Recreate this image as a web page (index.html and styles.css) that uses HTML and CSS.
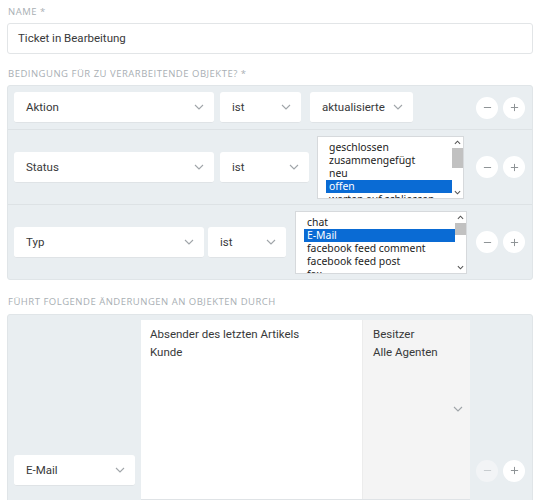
FILE: index.html
```html
<!DOCTYPE html>
<html lang="de">
<head>
    <meta charset="UTF-8">
    <meta name="viewport" content="width=device-width, initial-scale=1.0">
    <title>Trigger bearbeiten</title>
    <link rel="stylesheet" href="styles.css">
</head>
<body>
    <div class="form">
        <div class="label">Name *</div>
        <div class="input">Ticket in Bearbeitung</div>

        <div class="label label-gap">Bedingung für zu verarbeitende Objekte? *</div>
        <div class="panel">
            <div class="row">
                <div class="select w-attr">Aktion
                    <svg class="chev" viewBox="0 0 10 6"><path d="M1 1l4 4 4-4"/></svg>
                </div>
                <div class="select w-op">ist
                    <svg class="chev" viewBox="0 0 10 6"><path d="M1 1l4 4 4-4"/></svg>
                </div>
                <div class="select w-val">aktualisierte
                    <svg class="chev" viewBox="0 0 10 6"><path d="M1 1l4 4 4-4"/></svg>
                </div>
                <div class="controls">
                    <span class="circle"><svg viewBox="0 0 10 10"><path d="M1 5h8"/></svg></span>
                    <span class="circle"><svg viewBox="0 0 10 10"><path d="M1 5h8M5 1v8"/></svg></span>
                </div>
            </div>

            <div class="row row-tall">
                <div class="select w-attr">Status
                    <svg class="chev" viewBox="0 0 10 6"><path d="M1 1l4 4 4-4"/></svg>
                </div>
                <div class="select w-op2">ist
                    <svg class="chev" viewBox="0 0 10 6"><path d="M1 1l4 4 4-4"/></svg>
                </div>
                <div class="listbox lb-state">
                    <ul class="options">
                        <li>geschlossen</li>
                        <li>zusammengefügt</li>
                        <li>neu</li>
                        <li class="selected">offen</li>
                        <li>warten auf schliessen</li>
                    </ul>
                    <div class="scrollbar">
                        <svg class="arrow" viewBox="0 0 8 5"><path d="M1 4l3-3 3 3"/></svg>
                        <div class="track"><div class="thumb thumb-state"></div></div>
                        <svg class="arrow" viewBox="0 0 8 5"><path d="M1 1l3 3 3-3"/></svg>
                    </div>
                </div>
                <div class="controls">
                    <span class="circle"><svg viewBox="0 0 10 10"><path d="M1 5h8"/></svg></span>
                    <span class="circle"><svg viewBox="0 0 10 10"><path d="M1 5h8M5 1v8"/></svg></span>
                </div>
            </div>

            <div class="row row-tall">
                <div class="select w-attr3">Typ
                    <svg class="chev" viewBox="0 0 10 6"><path d="M1 1l4 4 4-4"/></svg>
                </div>
                <div class="select w-op3">ist
                    <svg class="chev" viewBox="0 0 10 6"><path d="M1 1l4 4 4-4"/></svg>
                </div>
                <div class="listbox lb-type">
                    <ul class="options">
                        <li>chat</li>
                        <li class="selected">E-Mail</li>
                        <li>facebook feed comment</li>
                        <li>facebook feed post</li>
                        <li>fax</li>
                    </ul>
                    <div class="scrollbar">
                        <svg class="arrow" viewBox="0 0 8 5"><path d="M1 4l3-3 3 3"/></svg>
                        <div class="track"><div class="thumb thumb-type"></div></div>
                        <svg class="arrow" viewBox="0 0 8 5"><path d="M1 1l3 3 3-3"/></svg>
                    </div>
                </div>
                <div class="controls">
                    <span class="circle"><svg viewBox="0 0 10 10"><path d="M1 5h8"/></svg></span>
                    <span class="circle"><svg viewBox="0 0 10 10"><path d="M1 5h8M5 1v8"/></svg></span>
                </div>
            </div>
        </div>

        <div class="label label-gap2">Führt folgende Änderungen an Objekten durch</div>
        <div class="panel panel-actions">
            <div class="row row-action">
                <div class="select w-mail">E-Mail
                    <svg class="chev" viewBox="0 0 10 6"><path d="M1 1l4 4 4-4"/></svg>
                </div>
                <div class="recipients">
                    <div class="picker">
                        <div class="picker-main">
                            <div class="entry">Absender des letzten Artikels</div>
                            <div class="entry">Kunde</div>
                        </div>
                        <div class="picker-side">
                            <div class="entry">Besitzer</div>
                            <div class="entry">Alle Agenten</div>
                            <svg class="chev side-chev" viewBox="0 0 10 6"><path d="M1 1l4 4 4-4"/></svg>
                        </div>
                    </div>
                    <div class="picker-next"></div>
                </div>
                <div class="controls">
                    <span class="circle disabled"><svg viewBox="0 0 10 10"><path d="M1 5h8"/></svg></span>
                    <span class="circle"><svg viewBox="0 0 10 10"><path d="M1 5h8M5 1v8"/></svg></span>
                </div>
            </div>
        </div>
    </div>
</body>
</html>
```

FILE: styles.css
```css
body {
    margin: 0;
    font-family: Roboto, "Open Sans", sans-serif;
    font-size: 11.5px;
    color: #38393a;
    background: #fff;
    overflow: hidden;
}
.form {
    width: 526px;
    margin-left: 7px;
    padding-top: 5px;
}
.label {
    font-family: "Open Sans", sans-serif;
    font-size: 9.5px;
    line-height: 14px;
    letter-spacing: 0.5px;
    text-transform: uppercase;
    color: #a9afb4;
    margin-left: 1px;
    margin-bottom: 4px;
}
.label-gap {
    margin-top: 13px;
}
.label-gap2 {
    margin-top: 15px;
    margin-bottom: 5px;
}
.input {
    height: 31px;
    box-sizing: border-box;
    border: 1px solid #e2e5e7;
    border-radius: 3px;
    padding: 0 10px;
    line-height: 29px;
    background: #fff;
}
.panel {
    background: #e9eef1;
    border: 1px solid #e0e5e8;
    border-radius: 3px;
}
.row {
    display: flex;
    align-items: center;
    gap: 6px;
    padding: 6px 6px;
    height: 43px;
    box-sizing: border-box;
}
.row + .row {
    border-top: 1px solid #dde2e5;
}
.row-tall {
    height: 75px;
}
.select {
    display: flex;
    align-items: center;
    justify-content: space-between;
    height: 31px;
    box-sizing: border-box;
    padding: 0 10px 0 12px;
    background: #fff;
    border-radius: 3px;
    border-bottom: 1px solid #dfe3e6;
}
.chev {
    width: 10px;
    height: 6px;
    fill: none;
    stroke: #a0a5a9;
    stroke-width: 1.1;
}
.w-attr { width: 200px; }
.w-op { width: 81px; }
.w-val { width: 103px; margin-left: 3px; }
.w-op2 { width: 89px; }
.w-attr3 { width: 190px; }
.w-op3 { width: 78px; margin-left: -2px; }
.w-mail { width: 121px; }

.listbox {
    display: flex;
    background: #fff;
    border: 1px solid #d6d9dc;
    height: 63px;
    box-sizing: border-box;
    overflow: hidden;
    font-family: "Noto Sans", sans-serif;
    font-size: 10.4px;
    color: #222;
}
.lb-state { width: 147px; margin-left: 2px; }
.lb-type { width: 172px; margin-left: 3px; }
.options {
    list-style: none;
    margin: 0;
    padding: 4px 0 0 8px;
    flex: 1;
}
.options li {
    height: 13px;
    line-height: 13px;
    padding: 0 3px;
    white-space: nowrap;
}
.options li.selected {
    background: #0a6bd4;
    color: #fff;
}
.scrollbar {
    width: 11px;
    display: flex;
    flex-direction: column;
    align-items: center;
    background: #fff;
}
.arrow {
    width: 7px;
    height: 5px;
    margin: 3px 0;
    fill: none;
    stroke: #555;
    stroke-width: 1.2;
}
.track {
    flex: 1;
    width: 100%;
}
.thumb {
    background: #c1c1c1;
    width: 100%;
}
.thumb-state { height: 20px; }
.thumb-type { height: 12px; }

.controls {
    display: flex;
    gap: 5px;
    margin-left: auto;
    margin-right: 1px;
}
.circle {
    width: 22px;
    height: 22px;
    border-radius: 50%;
    background: #fff;
    display: flex;
    align-items: center;
    justify-content: center;
}
.circle svg {
    width: 9px;
    height: 9px;
    fill: none;
    stroke: #8e9396;
    stroke-width: 1.1;
}
.circle.disabled {
    background: #f2f4f6;
}
.circle.disabled svg {
    stroke: #c6cbce;
}

.row-action {
    height: 312px;
    align-items: flex-start;
    padding-top: 5px;
}
.row-action .select,
.row-action .controls {
    align-self: center;
}
.recipients {
    display: flex;
    flex-direction: column;
    gap: 2px;
}
.picker {
    display: flex;
    height: 179px;
    border-bottom: 1px solid #dfe3e6;
}
.picker-main {
    width: 221px;
    background: #fff;
    padding: 5px 9px;
    box-sizing: border-box;
}
.picker-side {
    width: 108px;
    background: #f4f4f4;
    padding: 5px 10px;
    box-sizing: border-box;
    position: relative;
    border-left: 1px solid #ececec;
}
.entry {
    line-height: 18px;
}
.side-chev {
    position: absolute;
    right: 7px;
    top: 86px;
}
.picker-next {
    height: 140px;
    background: #fff;
    width: 329px;
}
```
